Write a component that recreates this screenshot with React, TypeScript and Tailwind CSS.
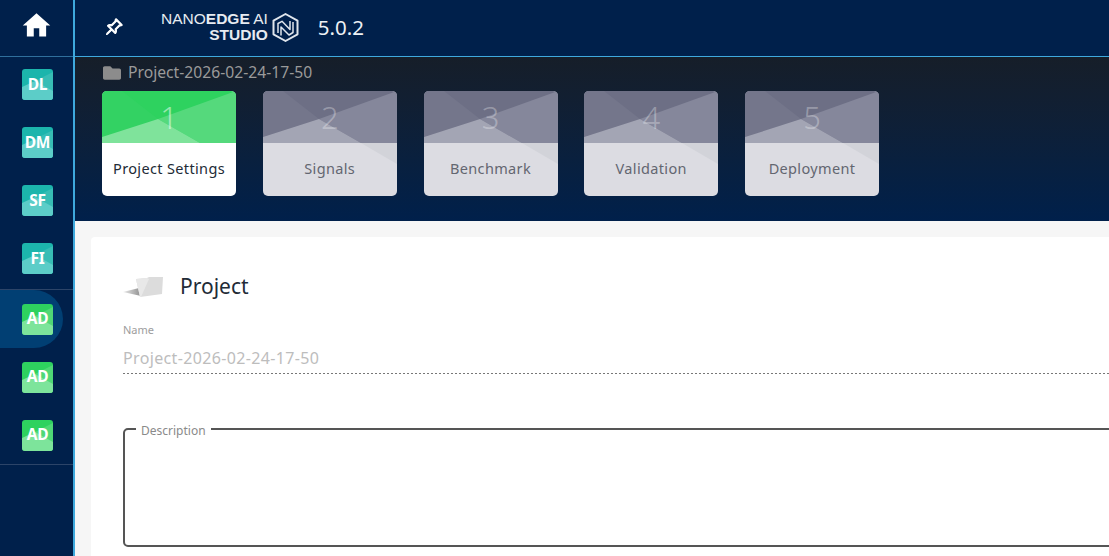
import { BsPinAngle } from "react-icons/bs";
import { FaFolder } from "react-icons/fa";
import { MdHome } from "react-icons/md";

const font = "font-['Noto_Sans',sans-serif]";

const steps = [
  { n: 1, label: "Project Settings", active: true },
  { n: 2, label: "Signals" },
  { n: 3, label: "Benchmark" },
  { n: 4, label: "Validation" },
  { n: 5, label: "Deployment" },
];

const badges = [
  { text: "DL", kind: "teal" },
  { text: "DM", kind: "teal" },
  { text: "SF", kind: "teal" },
  { text: "FI", kind: "teal" },
  { text: "AD", kind: "green", selected: true },
  { text: "AD", kind: "green" },
  { text: "AD", kind: "green" },
];

function Badge({ text, kind }: { text: string; kind: string }) {
  const teal = kind === "teal";
  return (
    <div className="relative flex h-[31px] w-[31px] items-center justify-center overflow-hidden rounded-[3px]">
      <svg viewBox="0 0 31 31" className="absolute inset-0 h-full w-full">
        <rect width="31" height="31" fill={teal ? "#1cb5ac" : "#2ed25f"} />
        <polygon points="13,12 31,3 31,31 20,31" fill={teal ? "#37bdb5" : "#4fd876"} />
        <polygon points="0,18 13,12 31,22 31,31 0,31" fill={teal ? "#5ccdc8" : "#7de49b"} />
      </svg>
      <span className="relative text-[15.5px] font-bold tracking-[-0.3px] text-white">{text}</span>
    </div>
  );
}

function Sidebar() {
  return (
    <aside className="flex w-[75px] shrink-0 flex-col border-r-2 border-[#3fa9dd] bg-[#00204b]">
      <div className="flex h-[57px] items-center justify-center border-b border-[#2f6f9c] pb-[5px]">
        <MdHome className="text-[33px] text-white" />
      </div>
      <div className="flex h-[232px] flex-col items-start gap-[27px] pl-[22px] pt-[12px]">
        {badges.slice(0, 4).map((b) => (
          <Badge key={b.text} text={b.text} kind={b.kind} />
        ))}
      </div>
      <div className="flex flex-col border-y border-[#2c4468]">
        {badges.slice(4).map((b, i) => (
          <div
            key={i}
            className={`flex h-[58px] w-[63px] items-center justify-end pr-[10px] ${b.selected ? "rounded-r-[29px] bg-[#013f73]" : ""}`}
          >
            <Badge text={b.text} kind={b.kind} />
          </div>
        ))}
      </div>
    </aside>
  );
}

function Logo() {
  return (
    <svg viewBox="1 0.5 26 29" className="h-[29px] w-[27px]" fill="none" stroke="#dfe5ec" strokeLinejoin="round">
      <path d="M14 1.5 L26 8.2 V21.8 L14 28.5 L2 21.8 V8.2 Z" strokeWidth="2" />
      <path d="M6.5 20.5V11L10.5 8.8L18.5 17V8.5" strokeWidth="1.5" />
      <path d="M9.5 23V14.5L17.5 22.5L21.5 20V9.5" strokeWidth="1.5" />
    </svg>
  );
}

function Header() {
  return (
    <header className="flex h-[57px] shrink-0 items-center border-b border-[#3fa9dd] bg-[#00204b] pb-[2px] pl-[30px]">
      <BsPinAngle className="text-[18px] text-white" stroke="white" strokeWidth={0.9} />
      <div className="ml-[38px] flex flex-col items-end font-['Liberation_Sans',sans-serif] text-[15.5px] leading-[16px] text-[#e6ebf1]">
        <span>
          NANO<span className="font-bold">EDGE</span> AI
        </span>
        <span className="font-bold">STUDIO</span>
      </div>
      <div className="ml-[4px]">
        <Logo />
      </div>
      <span className={`${font} ml-[19px] text-[20.5px] text-[#eef1f5]`}>5.0.2</span>
    </header>
  );
}

function StepTile({ n, label, active }: { n: number; label: string; active?: boolean }) {
  const c = active
    ? { base: "#2ed25f", left: "#33d263", right: "#55d97c", low: "#7fe39b", fold: "#ffffff", body: "bg-white text-[#222b36]", num: "text-white/50" }
    : { base: "#6d6f85", left: "#74768b", right: "#85879b", low: "#a3a5b4", fold: "#d2d3d9", body: "bg-[#dcdce2] text-[#636670]", num: "text-white/30" };
  return (
    <div className={`relative flex h-[105px] w-[134px] flex-col overflow-hidden rounded-[5px] ${c.body}`}>
      <svg viewBox="0 0 134 105" className="absolute inset-0 h-full w-full">
        <polygon points="0,0 134,0 134,52 0,52" fill={c.base} />
        <polygon points="0,0 20,0 56,28 0,46" fill={c.left} />
        <polygon points="56,28 134,0 134,52 98,52" fill={c.right} />
        <polygon points="0,46 56,28 98,52 0,52" fill={c.low} />
        <polygon points="98,52 134,52 134,73" fill={c.fold} />
      </svg>
      <div className={`relative flex h-[52px] items-center justify-center text-[31px] font-light ${c.num}`}>{n}</div>
      <div className="relative flex flex-1 items-center justify-center pb-[2px] text-[14.5px] tracking-[0.35px]">{label}</div>
    </div>
  );
}

function FolderArt() {
  return (
    <svg viewBox="0 0 40 20" className="h-[20px] w-[40px]">
      <defs>
        <linearGradient id="folder-shadow" x1="0" x2="1" y1="0" y2="0">
          <stop offset="0" stopColor="#8f8f8f" stopOpacity="0.2" />
          <stop offset="1" stopColor="#8f8f8f" />
        </linearGradient>
      </defs>
      <polygon points="0,15 16,11 18,19" fill="url(#folder-shadow)" />
      <polygon points="13,2 24,1 26,0 40,0 39,17 17,20" fill="#dcdcdc" />
      <polygon points="13,2 24,1 26,2 18,20 17,20" fill="#e8e8e8" />
    </svg>
  );
}

export default function App() {
  return (
    <div className={`${font} flex h-[556px] w-[1109px] overflow-hidden bg-[#f6f6f6]`}>
      <Sidebar />
      <main className="flex min-w-0 flex-1 flex-col">
        <Header />
        <section className="h-[164px] shrink-0 bg-gradient-to-b from-[#161e29] to-[#00204b] pl-[28px] pt-[7px]">
          <div className="flex h-[18px] items-center gap-[7px] text-[15.7px] text-[#9a9a9a]">
            <FaFolder className="text-[18px] text-[#8c8c8c]" />
            <span>Project-2026-02-24-17-50</span>
          </div>
          <div className="-ml-[1px] mt-[9px] flex gap-[26.75px]">
            {steps.map((s) => (
              <StepTile key={s.n} {...s} />
            ))}
          </div>
        </section>
        <section className="min-h-0 flex-1 pl-[16px] pt-[16px]">
          <div className="h-[500px] w-[1100px] rounded-[4px] bg-white pl-[32px] pt-[40px]">
            <div className="flex h-[20px] items-center gap-[17px]">
              <FolderArt />
              <h1 className="text-[21px] font-normal text-[#222b36]">Project</h1>
            </div>
            <label className="mt-[26px] block text-[11px] leading-[14px] text-[#9d9d9d]">Name</label>
            <div className="mt-[7px] h-[29px] text-[16px] leading-[28px] tracking-[0.35px] text-[#bdbdbd]">
              Project-2026-02-24-17-50
            </div>
            <div className="h-px bg-[repeating-linear-gradient(90deg,#777_0_2px,transparent_2px_4px)]" />
            <fieldset className="mt-[48px] h-[125px] rounded-[5px] border-2 border-[#555] pl-[11px]">
              <legend className="relative top-[2px] px-[5px] text-[12px] leading-[14px] text-[#8a8a8a]">Description</legend>
            </fieldset>
          </div>
        </section>
      </main>
    </div>
  );
}
